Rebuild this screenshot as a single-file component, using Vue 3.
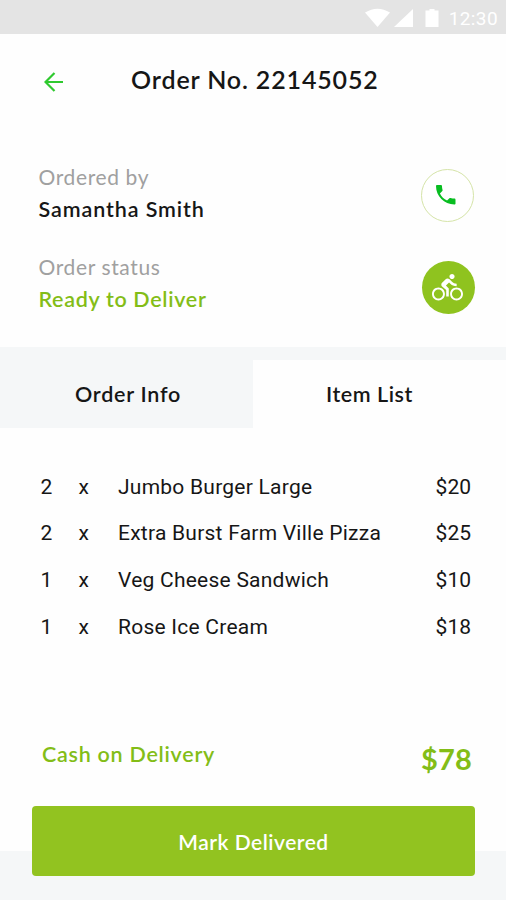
<script setup>
const items = [
  { qty: 2, name: 'Jumbo Burger Large', price: '$20' },
  { qty: 2, name: 'Extra Burst Farm Ville Pizza', price: '$25' },
  { qty: 1, name: 'Veg Cheese Sandwich', price: '$10' },
  { qty: 1, name: 'Rose Ice Cream', price: '$18' },
]
</script>

<template>
  <main class="screen">
    <div class="status-bar">
      <svg class="status-icons" viewBox="0 0 78 22" width="78" height="22">
        <path d="M0 4.500Q12.500 -3.200 25 4.500L12.500 19Z" />
        <path d="M29 19L48 1V19Z" />
        <path d="M64.500 1h5v1.500h4V19H60.500V2.500h4Z" />
      </svg>
      <span class="clock">12:30</span>
    </div>

    <header class="header">
      <svg class="back" viewBox="0 0 20 20" width="20" height="20">
        <path d="M10.500 1L1.500 10L10.500 19M1.500 10H19" />
      </svg>
      <h1 class="title">Order No. 22145052</h1>
    </header>

    <section class="details">
      <div class="detail">
        <div>
          <div class="label">Ordered by</div>
          <div class="value name">Samantha Smith</div>
        </div>
        <button class="round call" aria-label="Call">
          <svg viewBox="3 3 18 18" width="19.500" height="19.500">
            <path d="M6.620 10.790c1.440 2.830 3.760 5.140 6.590 6.590l2.200-2.200c.27-.27.67-.36 1.020-.24 1.120.37 2.330.57 3.570.57.55 0 1 .45 1 1V20c0 .55-.45 1-1 1-9.390 0-17-7.610-17-17 0-.55.45-1 1-1h3.500c.55 0 1 .45 1 1 0 1.250.2 2.450.57 3.570.11.35.03.74-.25 1.020l-2.200 2.200z" />
          </svg>
        </button>
      </div>
      <div class="detail">
        <div>
          <div class="label">Order status</div>
          <div class="value ready">Ready to Deliver</div>
        </div>
        <button class="round bike" aria-label="Track rider">
          <svg viewBox="0 0 24 24" width="31" height="31">
            <path d="M15.500 5.500c1.100 0 2-.9 2-2s-.9-2-2-2-2 .9-2 2 .9 2 2 2zM5 12c-2.800 0-5 2.200-5 5s2.200 5 5 5 5-2.200 5-5-2.200-5-5-5zm0 8.500c-1.900 0-3.500-1.600-3.500-3.500s1.600-3.500 3.500-3.500 3.500 1.600 3.500 3.500-1.600 3.500-3.500 3.500zm5.800-10l2.400-2.400.8.800c1.300 1.300 3 2.100 5.100 2.100V9c-1.500 0-2.700-.6-3.600-1.500l-1.900-1.900c-.5-.4-1-.6-1.600-.6s-1.100.2-1.400.6L7.800 8.400c-.4.4-.6.9-.6 1.400 0 .6.2 1.100.6 1.400L11 14v5h2v-6.200l-2.200-2.300zM19 12c-2.800 0-5 2.200-5 5s2.200 5 5 5 5-2.200 5-5-2.200-5-5-5zm0 8.500c-1.900 0-3.500-1.600-3.500-3.500s1.600-3.500 3.500-3.500 3.500 1.600 3.500 3.500-1.600 3.500-3.500 3.500z" />
          </svg>
        </button>
      </div>
    </section>

    <nav class="tabs">
      <div class="tab info">Order Info</div>
      <div class="tab active">Item List</div>
    </nav>

    <ul class="items">
      <li v-for="item in items" :key="item.name" class="item">
        <span>{{ item.qty }}</span>
        <span>x</span>
        <span>{{ item.name }}</span>
        <span class="price">{{ item.price }}</span>
      </li>
    </ul>

    <div class="total">
      <span class="method">Cash on Delivery</span>
      <span class="amount">$78</span>
    </div>

    <footer class="footer">
      <button class="deliver">Mark Delivered</button>
    </footer>
  </main>
</template>

<style>
body { margin: 0; background: #fff; }
</style>

<style scoped>
.screen {
  width: 506px;
  height: 900px;
  overflow: hidden;
  display: flex;
  flex-direction: column;
  background: #fefefe;
  color: #161616;
  font-family: Lato, sans-serif;
  font-weight: 500;
}
button { font: inherit; border: 0; padding: 0; }
.status-bar {
  height: 34px;
  flex: none;
  display: flex;
  align-items: center;
  justify-content: flex-end;
  gap: 6px;
  padding: 4px 8px 0 0;
  box-sizing: border-box;
  background: #e4e4e4;
  color: #fff;
}
.status-icons { fill: #fff; }
.clock { font: 400 19px/22px Roboto, sans-serif; letter-spacing: 0.4px; }
.header {
  height: 91px;
  flex: none;
  display: flex;
  align-items: center;
  padding-left: 44px;
}
.back { fill: none; stroke: #2fc92f; stroke-width: 2.200; margin-top: 4px; }
.title {
  margin: -2px 0 0 67px;
  font-size: 25px;
  line-height: 32px;
  font-weight: 600;
  letter-spacing: 0.860px;
}
.details {
  height: 222px;
  flex: none;
  box-sizing: border-box;
  padding: 36px 31px 0 38.500px;
}
.detail { display: flex; justify-content: space-between; height: 90px; }
.label { font-size: 21px; line-height: 32px; font-weight: 400; color: #a0a0a0; letter-spacing: 0.620px; }
.value { font-size: 21.500px; line-height: 32px; font-weight: 600; }
.name { letter-spacing: 0.9px; }
.ready { color: #83bd17; letter-spacing: 0.680px; }
.round {
  width: 53px;
  height: 53px;
  margin-top: 8px;
  border-radius: 50%;
  display: flex;
  align-items: center;
  justify-content: center;
  box-sizing: border-box;
}
.call { border: 1px solid #d5e4a8; background: #fff; fill: #08bd21; margin-right: 1px; padding: 0 3px 1px 0; }
.bike { background: #8fc31f; fill: #fff; margin-top: 10px; padding: 0 2px 1px 0; }
.tabs {
  height: 81px;
  flex: none;
  display: grid;
  grid-template-columns: 253px 253px;
  padding-top: 13px;
  box-sizing: border-box;
  background: #f5f7f8;
  font-size: 21.500px;
  font-weight: 600;
}
.tab { display: flex; align-items: center; padding: 0 0 0 75px; }
.info { letter-spacing: 0.750px; }
.active { background: #fefefe; padding-left: 73px; letter-spacing: 0.550px; }
.items {
  list-style: none;
  margin: 0;
  padding: 35.400px 35px 0 40.500px;
  height: 299px;
  flex: none;
  box-sizing: border-box;
  font-family: Roboto, sans-serif;
  font-weight: 400;
  font-size: 21px;
}
.item {
  display: grid;
  grid-template-columns: 38px 39.500px 1fr auto;
  height: 46.700px;
  align-items: center;
  letter-spacing: 0.240px;
}
.price { letter-spacing: 0; }
.total {
  height: 79px;
  flex: none;
  display: flex;
  justify-content: space-between;
  padding: 11px 34px 0 42px;
  box-sizing: border-box;
  color: #83bd17;
  font-weight: 600;
}
.method { font-size: 21.500px; line-height: 32px; letter-spacing: 0.740px; }
.amount { font-size: 29px; line-height: 42px; font-weight: 700; letter-spacing: 0.2px; }
.footer {
  height: 94px;
  flex: none;
  padding: 0 31px 0 32px;
  background: linear-gradient(#fefefe 45px, #f5f7f8 45px);
}
.deliver {
  width: 100%;
  height: 70px;
  border-radius: 4px;
  background: #92c320;
  color: #fff;
  font-size: 21px;
  font-weight: 600;
  letter-spacing: 0.5px;
}
</style>
